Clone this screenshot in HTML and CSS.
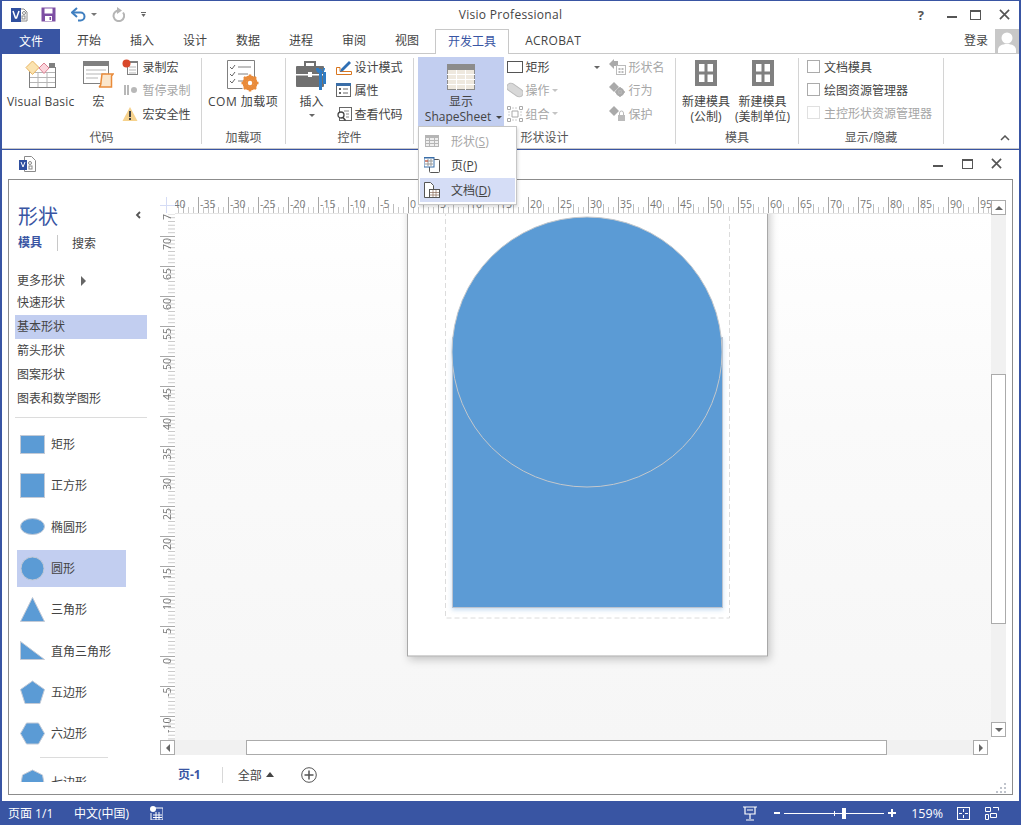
FILE: index.html
```html
<!DOCTYPE html>
<html lang="zh-CN">

<head>
    <meta charset="UTF-8">
    <title>Visio Professional</title>
    <link rel="stylesheet" href="styles.css">
</head>

<body>
    <div class="app">

        <!-- title bar -->
        <header class="titlebar">
            <div class="qat">
                <svg class="qat-visio" width="17" height="16" viewBox="0 0 17 16"><path d="M6 2h7l3 3v9H6z" fill="#fff" stroke="#8a8a8a"/><rect x="0" y="1" width="10" height="14" fill="#2f4f9f"/><path d="M2 4l2.500 7h1l2.500-7" fill="none" stroke="#fff" stroke-width="1.500"/><circle cx="13" cy="6" r="1.500" fill="none" stroke="#8a8a8a"/><rect x="11" y="9" width="3" height="3" fill="none" stroke="#8a8a8a"/></svg>
                <svg class="qat-save" width="15" height="15" viewBox="0 0 15 15"><path d="M0.500 0.500h14v14h-14z" fill="#7d4ea3"/><rect x="3.500" y="1.500" width="8" height="5" fill="#fff"/><rect x="4" y="9" width="7" height="5" fill="#fff"/><rect x="8.500" y="10" width="1.500" height="3" fill="#7d4ea3"/></svg>
                <svg class="qat-undo" width="16" height="15" viewBox="0 0 16 15"><path d="M2 5.500h7.500a4 4 0 0 1 0 8H7" fill="none" stroke="#3f7fc0" stroke-width="2"/><path d="M6 1L1 5.500 6 10" fill="none" stroke="#3f7fc0" stroke-width="2"/></svg>
                <i class="caret caret-gray"></i>
                <svg class="qat-redo" width="14" height="15" viewBox="0 0 14 15"><path d="M8 3.500a5.300 5.300 0 1 0 4 2" fill="none" stroke="#b5b5b5" stroke-width="2"/><path d="M6 0v7l5-3.500z" fill="#b5b5b5"/></svg>
                <span class="qat-more"></span>
            </div>
            <div class="app-title">Visio Professional</div>
            <div class="win-controls">
                <span class="help">?</span>
                <i class="win-min"></i>
                <i class="win-max"></i>
                <svg width="11" height="11" viewBox="0 0 12 12"><path d="M1 1l10 10M11 1L1 11" stroke="#555" stroke-width="1.800"/></svg>
            </div>
        </header>

        <!-- ribbon tabs -->
        <nav class="tabs">
            <a class="tab-file">文件</a>
            <a class="tab">开始</a>
            <a class="tab">插入</a>
            <a class="tab">设计</a>
            <a class="tab">数据</a>
            <a class="tab">进程</a>
            <a class="tab">审阅</a>
            <a class="tab">视图</a>
            <a class="tab-active">开发工具</a>
            <a class="tab-acrobat">ACROBAT</a>
            <div class="account">
                <span>登录</span>
                <svg class="avatar" width="24" height="24" viewBox="0 0 24 24"><rect width="24" height="24" fill="#c8c8c8"/><circle cx="12" cy="9" r="5.500" fill="#fff"/><path d="M3 24v-3c0-4 4-6 9-6s9 2 9 6v3z" fill="#fff"/></svg>
            </div>
        </nav>

        <!-- ribbon -->
        <section class="ribbon">

            <div class="group group-code">
                <div class="group-body">
                    <div class="large-btn label-wide">
                        <div class="large-icon">
                            <svg width="31" height="29" viewBox="0 0 31 29"><rect x="4.500" y="7.500" width="26" height="20" fill="#fff" stroke="#808080"/><path d="M5 12.500h25M5 17.500h25M5 22.500h25M13 12v15M22 12v15" stroke="#b5b5b5"/><rect x="24" y="3" width="6" height="5" fill="#808080"/><path d="M7.500 1L14 7.500 7.500 14.500 1 7.500z" fill="#fbe3b0" stroke="#e8b562"/><path d="M19 3l5 5-5 5.500L14 8z" fill="#fbd5dc" stroke="#dc7f92"/></svg>
                        </div>
                        <span>Visual Basic</span>
                    </div>
                    <div class="large-btn">
                        <div class="large-icon">
                            <svg width="32" height="29" viewBox="0 0 32 29"><rect x="1.500" y="1.500" width="25" height="22" fill="#fff" stroke="#808080"/><rect x="1" y="1" width="26" height="5" fill="#808080"/><path d="M4 10h20M4 14h20M4 18h12" stroke="#b5b5b5"/><path d="M20 14h11l-1.500 2v11H17c2-1 2-3 2-5z" fill="#fbe6cc" stroke="#e98b3a" stroke-width="1.500"/></svg>
                        </div>
                        <span>宏</span>
                    </div>
                    <div class="small-col">
                        <div class="small-row">
                            <svg width="16" height="16" viewBox="0 0 16 16"><rect x="5.500" y="3.500" width="10" height="12" fill="#fff" stroke="#808080"/><path d="M7 8h7M7 11h7M7 14h7" stroke="#b5b5b5"/><rect x="8" y="2" width="8" height="2" fill="#808080"/><circle cx="4.500" cy="4.500" r="4" fill="#d8482a"/></svg>
                            <span>录制宏</span>
                        </div>
                        <div class="small-row disabled">
                            <svg width="16" height="16" viewBox="0 0 16 16"><path d="M2 3h2v10H2zM5 3h2v10H5z" fill="#b8b8b8"/><circle cx="12" cy="8" r="3" fill="#b8b8b8"/></svg>
                            <span>暂停录制</span>
                        </div>
                        <div class="small-row">
                            <svg width="16" height="16" viewBox="0 0 16 16"><path d="M8 1l7.500 14H.5z" fill="#f6d28d"/><path d="M7 5h2v6H7zM7 12h2v2H7z" fill="#444"/></svg>
                            <span>宏安全性</span>
                        </div>
                    </div>
                </div>
                <div class="group-label">代码</div>
            </div>

            <div class="group group-addins">
                <div class="group-body">
                    <div class="large-btn label-wider">
                        <div class="large-icon">
                            <svg width="32" height="32" viewBox="0 0 32 32"><path d="M.5.500h27v22M.5.500v28h15" fill="#fff" stroke="#808080"/><path d="M3 7l2 2 3-4M3 14l2 2 3-4M3 21l2 2 3-4" fill="none" stroke="#666"/><path d="M11 7h13M11 14h10M11 21h5" stroke="#808080"/><circle cx="23" cy="23" r="5.500" fill="none" stroke="#e98b3a" stroke-width="4"/><path d="M23 14.500v17M14.500 23h17M17 17l12 12M29 17L17 29" stroke="#e98b3a" stroke-width="2.500"/><circle cx="23" cy="23" r="2.200" fill="#fff"/></svg>
                        </div>
                        <span>COM 加载项</span>
                    </div>
                </div>
                <div class="group-label">加载项</div>
            </div>

            <div class="group group-controls">
                <div class="group-body">
                    <div class="large-btn">
                        <div class="large-icon">
                            <svg width="31" height="30" viewBox="0 0 31 30"><path d="M9 6V2h10v4" fill="none" stroke="#707070" stroke-width="2"/><rect x="0" y="6" width="28" height="21" rx="1" fill="#707070"/><rect x="0" y="14" width="28" height="1.500" fill="#fff"/><rect x="12" y="12" width="4" height="5" fill="#fff"/><path d="M23 9v21h3V9z" fill="#2f7cc4"/><path d="M20 8c0 3 1 5 4 5s5-2 5-5l-2 0v3h-4V8zM27 12h3v12h-3z" fill="#2f7cc4"/></svg>
                        </div>
                        <span>插入</span>
                        <i class="caret caret-under"></i>
                    </div>
                    <div class="small-col tight-col">
                        <div class="small-row">
                            <svg width="16" height="16" viewBox="0 0 16 16"><path d="M.5 8.500v7h15v-3H4v-4z" fill="#fff" stroke="#d9761f"/><path d="M5 10L13 2l2 2-8 8-3 1z" fill="#2f6fb4"/></svg>
                            <span>设计模式</span>
                        </div>
                        <div class="small-row">
                            <svg width="16" height="16" viewBox="0 0 16 16"><rect x=".5" y="1.500" width="14" height="13" fill="#fff" stroke="#666"/><rect x="0" y="1" width="15" height="3" fill="#3a6ea8"/><rect x="3" y="6" width="2" height="2" fill="#666"/><rect x="3" y="10" width="2" height="2" fill="#666"/><path d="M7 7h5M7 11h5" stroke="#666"/></svg>
                            <span>属性</span>
                        </div>
                        <div class="small-row">
                            <svg width="16" height="16" viewBox="0 0 16 16"><rect x="3.500" y="1.500" width="12" height="13" fill="#fff" stroke="#666"/><path d="M8 5h5M10 8h3M10 11h3" stroke="#888"/><circle cx="5" cy="9" r="3" fill="#fff" stroke="#444" stroke-width="1.300"/><path d="M7 11.500l2.500 3" stroke="#444" stroke-width="1.500"/></svg>
                            <span>查看代码</span>
                        </div>
                    </div>
                </div>
                <div class="group-label">控件</div>
            </div>

            <div class="group group-shape">
                <div class="group-body">
                    <div class="large-btn sheet-btn">
                        <div class="large-icon">
                            <svg width="28" height="26" viewBox="0 0 28 26"><rect width="28" height="26" fill="#8c8c8c"/><path d="M1 6h26v19H1z" fill="#efe9df"/><path d="M0 10.500h28M0 15.500h28M0 20.500h28M9.500 6v20M18.500 6v20" stroke="#fff"/></svg>
                        </div>
                        <span>显示</span>
                        <span class="sheet-name">ShapeSheet<i class="caret caret-dark"></i></span>
                    </div>
                    <div class="small-col shape-col tight-col">
                        <div class="small-row">
                            <i class="rect-icon"></i>
                            <span>矩形</span>
                            <i class="caret caret-rect"></i>
                        </div>
                        <div class="small-row disabled">
                            <svg width="16" height="16" viewBox="0 0 16 16"><rect x="-1" y="4" width="18" height="8" rx="4" transform="rotate(35 8 8)" fill="#d8d8d8" stroke="#bbb"/></svg>
                            <span>操作</span>
                            <i class="caret caret-light"></i>
                        </div>
                        <div class="small-row disabled">
                            <svg width="16" height="16" viewBox="0 0 16 16"><path d="M.5.500h3v3h-3zM12.500.500h3v3h-3zM.5 12.500h3v3h-3zM12.500 12.500h3v3h-3z" fill="#fff" stroke="#aaa"/><path d="M5 5h6v6H5z" fill="none" stroke="#aaa"/><path d="M5 2h6M5 14h6M2 5v6M14 5v6" stroke="#ccc" stroke-dasharray="2 1"/></svg>
                            <span>组合</span>
                            <i class="caret caret-light"></i>
                        </div>
                    </div>
                    <div class="small-col tight-col">
                        <div class="small-row disabled">
                            <svg width="17" height="16" viewBox="0 0 17 16"><path d="M0 5l5-5v10z" fill="#aaa"/><path d="M4 2h5v5H4z" fill="#aaa"/><rect x="7.500" y="6.500" width="9" height="9" fill="#fff" stroke="#bbb"/><path d="M9.500 9h2v2h-2zM12.500 9h2v2h-2zM9.500 12h2v2h-2zM12.500 12h2v2h-2z" fill="#bbb"/></svg>
                            <span>形状名</span>
                        </div>
                        <div class="small-row disabled">
                            <svg width="17" height="16" viewBox="0 0 17 16"><path d="M5 0l5 5-5 5-5-5z" fill="#aaa"/><circle cx="11" cy="10" r="3" fill="none" stroke="#aaa" stroke-width="2.500"/><path d="M11 5v10M6 10h10" stroke="#aaa" stroke-width="1.500"/></svg>
                            <span>行为</span>
                        </div>
                        <div class="small-row disabled">
                            <svg width="17" height="16" viewBox="0 0 17 16"><path d="M5 0l5 5-5 5-5-5z" fill="#aaa"/><rect x="9" y="9" width="7" height="6" fill="#bbb"/><path d="M10.500 9V7a2 2 0 0 1 4 0v2" fill="none" stroke="#bbb"/></svg>
                            <span>保护</span>
                        </div>
                    </div>
                </div>
                <div class="group-label">形状设计</div>

                <div class="sheet-menu">
                    <div class="menu-item disabled">
                        <svg width="14" height="12" viewBox="0 0 14 12"><rect width="14" height="12" fill="#b5b5b5"/><path d="M1 3h12v8H1z" fill="#eee"/><path d="M0 5.500h14M0 8.500h14M4.500 3v9M9.500 3v9" stroke="#b5b5b5"/></svg>
                        <span>形状(<u>S</u>)</span>
                    </div>
                    <div class="menu-item">
                        <svg width="16" height="16" viewBox="0 0 16 16"><rect x="5.500" y="2.500" width="10" height="13" rx="1" fill="#fff" stroke="#555"/><rect x="0" y="0" width="10" height="10" fill="#fff" stroke="#3a6ea8"/><path d="M0 .500h10" stroke="#3a6ea8" stroke-width="2"/><path d="M1 4h8M1 7h8M4 2v7M7 2v7" stroke="#999"/><path d="M1 4h3" stroke="#d8482a"/></svg>
                        <span>页(<u>P</u>)</span>
                    </div>
                    <div class="menu-item current">
                        <svg width="16" height="16" viewBox="0 0 16 16"><path d="M.5.500h6l3 3v12h-9z" fill="#fff" stroke="#555"/><rect x="5.500" y="7.500" width="10" height="8" fill="#fff" stroke="#555"/><path d="M6 10.500h9M6 13h9M9 8v7M12 8v7" stroke="#8a6a5a" stroke-width=".700"/></svg>
                        <span>文档(<u>D</u>)</span>
                    </div>
                </div>
            </div>

            <div class="group group-stencil">
                <div class="group-body">
                    <div class="large-btn">
                        <div class="large-icon">
                            <svg width="22" height="26" viewBox="0 0 22 26"><path d="M0 0h22v26H0zM4 4v7.500h5.500V4zM12.500 4v7.500H18V4zM4 14.500V22h5.500v-7.500zM12.500 14.500V22H18v-7.500z" fill="#808080" fill-rule="evenodd"/></svg>
                        </div>
                        <span>新建模具</span>
                        <span>(公制)</span>
                    </div>
                    <div class="large-btn">
                        <div class="large-icon">
                            <svg width="22" height="26" viewBox="0 0 22 26"><path d="M0 0h22v26H0zM4 4v7.500h5.500V4zM12.500 4v7.500H18V4zM4 14.500V22h5.500v-7.500zM12.500 14.500V22H18v-7.500z" fill="#808080" fill-rule="evenodd"/></svg>
                        </div>
                        <span>新建模具</span>
                        <span>(美制单位)</span>
                    </div>
                </div>
                <div class="group-label">模具</div>
            </div>

            <div class="group group-show">
                <div class="group-body">
                    <div class="small-col check-col">
                        <div class="small-row"><i class="check"></i><span>文档模具</span></div>
                        <div class="small-row"><i class="check"></i><span>绘图资源管理器</span></div>
                        <div class="small-row disabled"><i class="check"></i><span>主控形状资源管理器</span></div>
                    </div>
                </div>
                <div class="group-label">显示/隐藏</div>
            </div>

            <div class="ribbon-end">
                <svg width="10" height="6" viewBox="0 0 10 6"><path d="M1 5l4-4 4 4" fill="none" stroke="#555" stroke-width="1.500"/></svg>
            </div>
        </section>

        <!-- document window -->
        <div class="doc-bar">
            <svg width="17" height="16" viewBox="0 0 17 16"><path d="M5.500.500h7l4 4v11h-11z" fill="#fff" stroke="#8a8a8a"/><rect x="0" y="4" width="8" height="10" fill="#2f4f9f"/><path d="M2 6l2 5 2-5" fill="none" stroke="#fff"/><circle cx="11" cy="7" r="1.500" fill="none" stroke="#8a8a8a"/><rect x="10" y="10" width="3" height="3" fill="none" stroke="#8a8a8a"/></svg>
            <div class="doc-controls">
                <i class="win-min"></i>
                <i class="win-max"></i>
                <svg width="11" height="11" viewBox="0 0 12 12"><path d="M1 1l10 10M11 1L1 11" stroke="#555" stroke-width="1.800"/></svg>
            </div>
        </div>

        <div class="frame">

            <!-- shapes panel -->
            <aside class="stencil">
                <div class="stencil-head">
                    <span class="stencil-title">形状</span>
                    <svg width="6" height="8" viewBox="0 0 6 8"><path d="M5 1L2 4l3 3" fill="none" stroke="#555" stroke-width="1.800"/></svg>
                </div>
                <div class="stencil-tabs">
                    <span class="stencil-tab-on">模具</span>
                    <span class="stencil-tab">搜索</span>
                </div>
                <ul class="stencil-list">
                    <li class="more">更多形状<i class="more-arrow"></i></li>
                    <li>快速形状</li>
                    <li class="selected">基本形状</li>
                    <li>箭头形状</li>
                    <li>图案形状</li>
                    <li>图表和数学图形</li>
                </ul>
                <div class="stencil-rule"></div>
                <div class="master-row">
                    <svg width="25" height="25" viewBox="0 0 25 25"><rect x=".5" y="3.500" width="24" height="18" class="master"/></svg>
                    <span>矩形</span>
                </div>
                <div class="master-row">
                    <svg width="25" height="25" viewBox="0 0 25 25"><rect x=".5" y=".5" width="24" height="24" class="master"/></svg>
                    <span>正方形</span>
                </div>
                <div class="master-row">
                    <svg width="25" height="25" viewBox="0 0 25 25"><ellipse cx="12.500" cy="12.500" rx="12" ry="8" class="master"/></svg>
                    <span>椭圆形</span>
                </div>
                <div class="master-row current">
                    <svg width="25" height="25" viewBox="0 0 25 25"><circle cx="12.500" cy="12.500" r="11.500" class="master"/></svg>
                    <span>圆形</span>
                </div>
                <div class="master-row">
                    <svg width="25" height="25" viewBox="0 0 25 25"><path d="M12.500.5l12 24H.5z" class="master"/></svg>
                    <span>三角形</span>
                </div>
                <div class="master-row">
                    <svg width="25" height="25" viewBox="0 0 25 25"><path d="M.5 3.500l24 18H.5z" class="master"/></svg>
                    <span>直角三角形</span>
                </div>
                <div class="master-row">
                    <svg width="25" height="25" viewBox="0 0 25 25"><path d="M12.500 1l12 8.500-4.500 14H5L.5 9.500z" class="master"/></svg>
                    <span>五边形</span>
                </div>
                <div class="master-row">
                    <svg width="25" height="25" viewBox="0 0 25 25"><path d="M6.500 2h12l6 10.500-6 10.500h-12l-6-10.500z" class="master"/></svg>
                    <span>六边形</span>
                </div>
                <div class="stencil-rule-short"></div>
                <div class="master-row">
                    <svg width="25" height="25" viewBox="0 0 25 25"><path d="M12.500 1l10 5 2 11-6 7h-12l-6-7 2-11z" class="master"/></svg>
                    <span>七边形</span>
                </div>
            </aside>

            <!-- drawing area -->
            <div class="drawing">
                <div class="ruler-corner"></div>
                <div class="ruler-h">
                    <span>-40</span><span>-35</span><span>-30</span><span>-25</span><span>-20</span><span>-15</span><span>-10</span><span>-5</span>
                    <span>0</span><span>5</span><span>10</span><span>15</span><span>20</span><span>25</span><span>30</span><span>35</span>
                    <span>40</span><span>45</span><span>50</span><span>55</span><span>60</span><span>65</span><span>70</span><span>75</span>
                    <span>80</span><span>85</span><span>90</span><span>95</span>
                </div>
                <div class="scroll-v">
                    <button class="scroll-btn"><i class="arrow-up"></i></button>
                    <div class="scroll-v-track"><div class="scroll-v-thumb"></div></div>
                    <button class="scroll-btn"><i class="arrow-down"></i></button>
                </div>
                <div class="ruler-v">
                    <span>75</span><span>70</span><span>65</span><span>60</span><span>55</span><span>50</span><span>45</span><span>40</span><span>35</span>
                    <span>30</span><span>25</span><span>20</span><span>15</span><span>10</span><span>5</span><span>0</span><span>-5</span><span>-10</span>
                </div>
                <div class="canvas">
                    <svg width="816" height="526" viewBox="0 0 816 526">
                        <defs>
                            <filter id="pageShadow" x="-5%" y="-5%" width="110%" height="110%"><feDropShadow dx="2" dy="3" stdDeviation="4" flood-color="#000" flood-opacity=".22"/></filter>
                            <filter id="rectShadow" x="-5%" y="-5%" width="110%" height="110%"><feDropShadow dx="0" dy="2" stdDeviation="2" flood-color="#5b9bd5" flood-opacity=".35"/></filter>
                        </defs>
                        <rect x="232.500" y="-10" width="360" height="452" fill="#fff" stroke="#a8a8a8" filter="url(#pageShadow)"/>
                        <rect x="270.500" y="-10" width="284" height="414" fill="none" stroke="#dcdcdc" stroke-dasharray="5 3"/>
                        <rect x="277.500" y="123.500" width="270" height="270" fill="#5b9bd5" stroke="#bcc4d0" filter="url(#rectShadow)"/>
                        <circle cx="412" cy="138" r="135" fill="#5b9bd5" stroke="#c4c8cc"/>
                    </svg>
                </div>
                <div class="scroll-h">
                    <button class="scroll-btn"><i class="arrow-left"></i></button>
                    <div class="scroll-h-track"><div class="scroll-h-thumb"></div></div>
                    <button class="scroll-btn"><i class="arrow-right"></i></button>
                </div>
                <div class="pagebar">
                    <span class="page-on">页-1</span>
                    <span class="page-all">全部<i class="page-caret"></i></span>
                    <svg width="16" height="16" viewBox="0 0 16 16"><circle cx="8" cy="8" r="7.300" fill="#fff" stroke="#555"/><path d="M8 3.500v9M3.500 8h9" stroke="#555" stroke-width="1.500"/></svg>
                </div>
            </div>
            <svg class="grip" width="10" height="10" viewBox="0 0 10 10"><path d="M8 0h2v2H8zM4 4h2v2H4zM8 4h2v2H8zM0 8h2v2H0zM4 8h2v2H4zM8 8h2v2H8z" fill="#c0c4cc"/></svg>
        </div>

        <!-- status bar -->
        <footer class="statusbar">
            <span class="status-page">页面 1/1</span>
            <span class="status-lang">中文(中国)</span>
            <svg class="status-macro" width="13" height="14" viewBox="0 0 13 14"><circle cx="3" cy="3" r="3" fill="#fff"/><path d="M5 2h8v12H1V7" fill="none" stroke="#fff"/><path d="M3 9h9M3 11.500h9M6 6v8M9 6v8" stroke="#fff"/></svg>
            <div class="status-right">
                <svg class="status-present" width="14" height="15" viewBox="0 0 14 15"><path d="M0 1h14M2 1v7h10V1M7 8v5M3 14h8M4 4h6" fill="none" stroke="#fff" stroke-width="1.200"/></svg>
                <i class="zoom-minus"></i>
                <div class="zoom-track"><i class="zoom-tick"></i><i class="zoom-thumb"></i></div>
                <svg class="zoom-plus" width="8" height="8" viewBox="0 0 8 8"><path d="M4 0v8M0 4h8" stroke="#fff" stroke-width="2"/></svg>
                <span class="zoom-value">159%</span>
                <svg class="status-fit" width="13" height="13" viewBox="0 0 13 13"><rect x=".5" y=".5" width="12" height="12" fill="none" stroke="#fff"/><path d="M6.500 2v3M6.500 8v3M2 6.500h3M8 6.500h3" stroke="#fff"/></svg>
                <svg class="status-win" width="14" height="13" viewBox="0 0 14 13"><path d="M.5.500h5v4h-5zM.5 7.500h3v5h-3zM5.500 6.500h6v4h-6zM8 .500h5.500v3" fill="none" stroke="#fff"/></svg>
            </div>
        </footer>
    </div>
</body>

</html>
```

FILE: styles.css
```css
* {
    box-sizing: border-box;
}

html,
body {
    margin: 0;
    padding: 0;
}

body {
    font-family: "Open Sans", "Noto Sans CJK SC", sans-serif;
    font-size: 12px;
    color: #444;
    background: #fff;
}

i {
    display: block;
}

.app {
    width: 1021px;
    height: 825px;
    display: flex;
    flex-direction: column;
    border-top: 1px solid #3955a3;
    border-left: 2px solid #3955a3;
    border-right: 2px solid #3955a3;
    overflow: hidden;
}

/* title bar */
.titlebar {
    height: 28px;
    flex: none;
    display: grid;
    grid-template-columns: 1fr auto 1fr;
    align-items: center;
    padding-bottom: 1px;
}

.qat {
    display: flex;
    align-items: center;
    padding-left: 9px;
}

.qat-save {
    margin-left: 13px;
}

.qat-undo {
    margin-left: 15px;
}

.qat-redo {
    margin-left: 14px;
}

.qat .caret-gray {
    margin-left: 4px;
}

.qat-more {
    width: 5px;
    height: 5px;
    margin-left: 16px;
    border-top: 1px solid #666;
    border-bottom: 3px solid #666;
    clip-path: polygon(0 0, 100% 0, 100% 30%, 50% 100%, 0 30%);
}

.app-title {
    font-size: 12px;
    letter-spacing: 0.300px;
    color: #444;
}

.win-controls {
    display: flex;
    align-items: center;
    justify-content: flex-end;
    padding-right: 9px;
}

.help {
    font-weight: 700;
    font-size: 13px;
    color: #555;
    margin-right: 23px;
}

.win-min {
    width: 10px;
    height: 2px;
    background: #555;
    margin: 5px 13px 0 0;
}

.win-max {
    width: 11px;
    height: 10px;
    border: 1px solid #555;
    border-top-width: 2px;
    margin: 0 18px 0 0;
}

.caret {
    width: 0;
    height: 0;
    border-left: 3px solid transparent;
    border-right: 3px solid transparent;
    border-top: 3px solid #666;
}

.caret-gray {
    border-top-color: #777;
}

.caret-dark {
    display: inline-block;
    border-top-color: #444;
    margin-left: 5px;
    vertical-align: middle;
}

.caret-light {
    border-top-color: #c4c4c4;
    margin-left: 0;
}

.caret-rect {
    border-top-color: #666;
    margin-left: 42px;
}

.caret-under {
    margin-top: 5px;
}

/* tabs */
.tabs {
    height: 25px;
    flex: none;
    display: flex;
    align-items: stretch;
    border-bottom: 1px solid #c8c8c8;
}

.tabs a {
    display: flex;
    align-items: center;
    padding-bottom: 2px;
}

.tab-file {
    width: 58px;
    margin-bottom: -1px;
    justify-content: center;
    background: #3955a3;
    color: #fff;
}

.tab {
    padding-left: 14.500px;
    padding-right: 14.500px;
}

.tab:nth-child(2) {
    margin-left: 2.500px;
}

.tab-active {
    margin-left: 1.500px;
    padding-left: 12px;
    padding-right: 12px;
    margin-bottom: -1px;
    background: #fff;
    border: 1px solid #c8c8c8;
    border-bottom: 0;
    color: #3955a3;
}

.tab-acrobat {
    padding-left: 16px;
    letter-spacing: 0.300px;
}

.account {
    margin-left: auto;
    display: flex;
    align-items: center;
    gap: 7px;
}

.account span {
    margin-bottom: 2px;
}

.avatar {
    display: block;
}

/* ribbon */
.ribbon {
    height: 95px;
    flex: none;
    display: flex;
    align-items: flex-start;
    border-bottom: 1px solid #c8c8c8;
    box-shadow: 0 1px 0 #3955a3;
}

.group {
    position: relative;
    height: 86px;
    margin-top: 4px;
    display: flex;
    flex-direction: column;
    border-right: 1px solid #d4d4d4;
    flex: none;
}

.group-code {
    width: 200px;
}

.group-addins {
    width: 84px;
}

.group-controls {
    width: 128px;
}

.group-shape {
    width: 262px;
}

.group-stencil {
    width: 123px;
}

.group-show {
    width: 145px;
}

.group-body {
    height: 72px;
    display: flex;
    align-items: flex-start;
}

.group-label {
    height: 14px;
    padding-top: 1px;
    line-height: 14px;
    text-align: center;
    color: #555;
}

.group-code .group-body {
    padding-left: 5px;
    gap: 8px;
}

.group-addins .group-body {
    padding-left: 6px;
}

.group-controls .group-body {
    padding-left: 10px;
    gap: 9px;
}

.group-shape .group-body {
    padding-left: 4px;
}

.group-stencil .group-body {
    padding-left: 6px;
    gap: 5px;
}

.group-show .group-body {
    padding-left: 8px;
}

.large-btn {
    display: flex;
    flex-direction: column;
    align-items: center;
    line-height: 15px;
    white-space: nowrap;
}

.label-wide {
    letter-spacing: 0.200px;
}

.label-wider {
    letter-spacing: 0.500px;
}

.large-icon {
    height: 36px;
    padding-top: 2px;
}

.large-icon svg,
.small-row svg {
    display: block;
    flex: none;
}

.sheet-btn {
    width: 86px;
    height: 69px;
    margin-top: -1px;
    background: #c2cef0;
}

.sheet-btn .large-icon {
    height: 37px;
    padding-top: 7px;
}

.sheet-name {
    margin-left: 5px;
}

.small-col {
    margin-top: -2.500px;
    display: flex;
    flex-direction: column;
}

.shape-col {
    width: 102px;
    margin-left: 3px;
}

.small-row {
    height: 23.250px;
    display: flex;
    align-items: center;
    gap: 4px;
    white-space: nowrap;
}

.tight-col .small-row {
    gap: 2.500px;
}

.check-col {
    margin-top: -3px;
}

.check-col .small-row {
    height: 23px;
}

.small-row.disabled {
    color: #a6a6a6;
}

.rect-icon {
    width: 16px;
    height: 12px;
    border: 1px solid #555;
}

.check {
    width: 13px;
    height: 13px;
    border: 1px solid #ababab;
    background: #fff;
}

.disabled .check {
    border-color: #e0e0e0;
}

.ribbon-end {
    flex: 1;
    height: 93px;
    display: flex;
    align-items: flex-end;
    justify-content: flex-end;
    padding: 0 9px 6px 0;
}

/* ShapeSheet dropdown */
.sheet-menu {
    position: absolute;
    left: 4px;
    top: 68px;
    width: 99px;
    height: 79px;
    padding: 2px 1px;
    background: #fff;
    border: 1px solid #c6c6c6;
    box-shadow: 1px 2px 3px rgba(0, 0, 0, .15);
    z-index: 5;
}

.menu-item {
    height: 24px;
    display: flex;
    align-items: center;
    padding-left: 4px;
}

.menu-item svg {
    flex: none;
    width: 16px;
}

.menu-item span {
    margin-left: 11px;
}

.menu-item.disabled {
    color: #a6a6a6;
}

.menu-item.current {
    margin-top: 1px;
    background: #d5ddf6;
}

/* document window */
.doc-bar {
    height: 29px;
    margin-top: 1px;
    flex: none;
    display: flex;
    align-items: center;
    justify-content: space-between;
    padding: 0 17px 2px 17px;
}

.doc-controls {
    display: flex;
    align-items: center;
}

.doc-controls .win-min {
    margin-right: 19px;
}

.frame {
    position: relative;
    width: 1005px;
    height: 616px;
    margin-left: 6px;
    flex: none;
    display: flex;
    align-items: flex-start;
    border: 1px solid #8c8c8c;
}

/* shapes panel */
.stencil {
    width: 151px;
    height: 602px;
    flex: none;
    padding-top: 20px;
    overflow: hidden;
}

.stencil-head {
    height: 30px;
    display: flex;
    align-items: center;
    justify-content: space-between;
    padding: 0 19px 0 9px;
}

.stencil-title {
    font-size: 20px;
    color: #3955a3;
}

.stencil-tabs {
    height: 22px;
    margin-top: 2px;
    display: flex;
    align-items: center;
    padding-left: 9px;
}

.stencil-tab-on {
    font-weight: 700;
    color: #3955a3;
    padding-right: 15px;
    border-right: 1px solid #c8c8c8;
    line-height: 16px;
}

.stencil-tab {
    padding-left: 14px;
}

.stencil-list {
    list-style: none;
    margin: 16px 0 0 6px;
    padding: 0;
    width: 132px;
}

.stencil-list li {
    height: 24px;
    line-height: 24px;
    padding-left: 2px;
}

.stencil-list .more {
    height: 21px;
    line-height: 21px;
    display: flex;
    align-items: center;
}

.stencil-list .selected {
    background: #c2cef0;
}

.more-arrow {
    margin-left: 16px;
    border-left: 5px solid #666;
    border-top: 5px solid transparent;
    border-bottom: 5px solid transparent;
}

.stencil-rule {
    width: 132px;
    height: 1px;
    margin: 6px 0 5.500px 6px;
    background: #dcdcdc;
}

.stencil-rule-short {
    width: 68px;
    height: 1px;
    margin: 3px 0 3px 31px;
    background: #dcdcdc;
}

.master-row {
    height: 41.330px;
    display: flex;
    align-items: center;
    gap: 6px;
    padding-left: 11px;
}

.master-row svg {
    flex: none;
    display: block;
}

.master-row.current {
    width: 109px;
    height: 37px;
    margin: 2.165px 0 2.165px 8px;
    padding-left: 3px;
    background: #c2cef0;
}

.master {
    fill: #5b9bd5;
    stroke: #c3cad6;
}

/* drawing area */
.drawing {
    display: grid;
    grid-template-columns: 15px 816px 15px;
    grid-template-rows: 34px 526px 15px 39px;
}

.ruler-corner {
    align-self: end;
    height: 17px;
    background: linear-gradient(#d5dcf5, #d5dcf5) 6px 0 / 1px 16px no-repeat, linear-gradient(#d5dcf5, #d5dcf5) 0 8px / 15px 1px no-repeat;
}

.ruler-h {
    align-self: end;
    height: 17px;
    display: flex;
    overflow: hidden;
    background:
        linear-gradient(90deg, #a8a8a8 1px, transparent 1px) -7px 0 / 30px 16px repeat-x,
        linear-gradient(90deg, #bdbdbd 1px, transparent 1px) 8px 100% / 30px 9px repeat-x,
        linear-gradient(90deg, #c8c8c8 1px, transparent 1px) -7px 100% / 5px 6px repeat-x;
    background-color: #fff;
    border-bottom: 1px solid #e6e6e6;
}

.ruler-h span {
    flex: none;
    width: 30px;
    padding-left: 2px;
    line-height: 14px;
    font-size: 10.500px;
    color: #777;
}

.ruler-h span:first-child {
    margin-left: -7px;
}

.ruler-v {
    height: 526px;
    overflow: hidden;
    background:
        linear-gradient(180deg, #a8a8a8 1px, transparent 1px) 0 -8px / 15px 30px repeat-y,
        linear-gradient(180deg, #c8c8c8 1px, transparent 1px) 100% -8px / 7px 3.750px repeat-y;
    background-color: #fff;
}

.ruler-v span {
    display: block;
    height: 30px;
    padding-bottom: 2px;
    writing-mode: vertical-rl;
    transform: rotate(180deg);
    text-align: right;
    line-height: 14px;
    font-size: 10.500px;
    color: #777;
}

.ruler-v span:first-child {
    margin-top: -8px;
}

.canvas {
    width: 816px;
    height: 526px;
    overflow: hidden;
    background: linear-gradient(#fff, #fafafa 40%, #f6f6f6);
}

.canvas svg {
    display: block;
}

.scroll-v {
    grid-column: 3;
    grid-row: 1 / 3;
    margin: 20px 0 3px;
    display: flex;
    flex-direction: column;
    background: #f1f1f1;
}

.scroll-v-track {
    flex: 1;
    padding-top: 159px;
}

.scroll-v-thumb {
    height: 250px;
    background: #fff;
    border: 1px solid #ababab;
}

.scroll-h {
    grid-column: 1 / 3;
    margin-right: 3px;
    display: flex;
    background: #f1f1f1;
}

.scroll-h-track {
    flex: 1;
    padding-left: 71px;
}

.scroll-h-thumb {
    width: 641px;
    height: 15px;
    background: #fff;
    border: 1px solid #ababab;
}

.scroll-btn {
    width: 15px;
    height: 15px;
    flex: none;
    padding: 0;
    display: flex;
    align-items: center;
    justify-content: center;
    background: #fff;
    border: 1px solid #ababab;
}

.arrow-up,
.arrow-down {
    border-left: 4px solid transparent;
    border-right: 4px solid transparent;
}

.arrow-up {
    border-bottom: 4px solid #666;
}

.arrow-down {
    border-top: 4px solid #666;
}

.arrow-left,
.arrow-right {
    border-top: 4px solid transparent;
    border-bottom: 4px solid transparent;
}

.arrow-left {
    border-right: 4px solid #666;
}

.arrow-right {
    border-left: 4px solid #666;
}

.pagebar {
    grid-column: 1 / 3;
    display: flex;
    align-items: center;
    padding-left: 18px;
}

.pagebar svg {
    margin-left: 27px;
    display: block;
}

.page-on {
    font-weight: 700;
    color: #3955a3;
    padding-right: 21px;
    border-right: 1px solid #d8d8d8;
    line-height: 16px;
}

.page-all {
    display: flex;
    align-items: center;
    padding-left: 15px;
}

.page-caret {
    margin-left: 4px;
    border-left: 4px solid transparent;
    border-right: 4px solid transparent;
    border-bottom: 5px solid #444;
}

.grip {
    position: absolute;
    right: 6px;
    bottom: 1px;
}

/* status bar */
.statusbar {
    height: 24px;
    margin-top: 6px;
    margin-left: -2px;
    margin-right: -2px;
    flex: none;
    display: flex;
    align-items: center;
    background: #3955a3;
    color: #fff;
    padding-left: 8px;
}

.status-page {
    width: 66px;
}

.status-lang {
    width: 76px;
}

.status-right {
    margin-left: auto;
    display: flex;
    align-items: center;
    padding-right: 22px;
}

.status-macro,
.status-right svg {
    display: block;
}

.zoom-minus {
    width: 6px;
    height: 2px;
    margin-left: 17px;
    background: #fff;
}

.zoom-track {
    position: relative;
    width: 100px;
    height: 1px;
    margin-left: 4px;
    background: #fff;
}

.zoom-tick {
    position: absolute;
    left: 50px;
    top: -2px;
    width: 1px;
    height: 5px;
    background: #fff;
}

.zoom-thumb {
    position: absolute;
    left: 58px;
    top: -5px;
    width: 4px;
    height: 11px;
    background: #fff;
}

.zoom-plus {
    margin-left: 4px;
}

.zoom-value {
    margin-left: 15px;
    font-size: 12.500px;
}

.status-fit {
    margin-left: 14px;
}

.status-win {
    margin-left: 15px;
}
```
